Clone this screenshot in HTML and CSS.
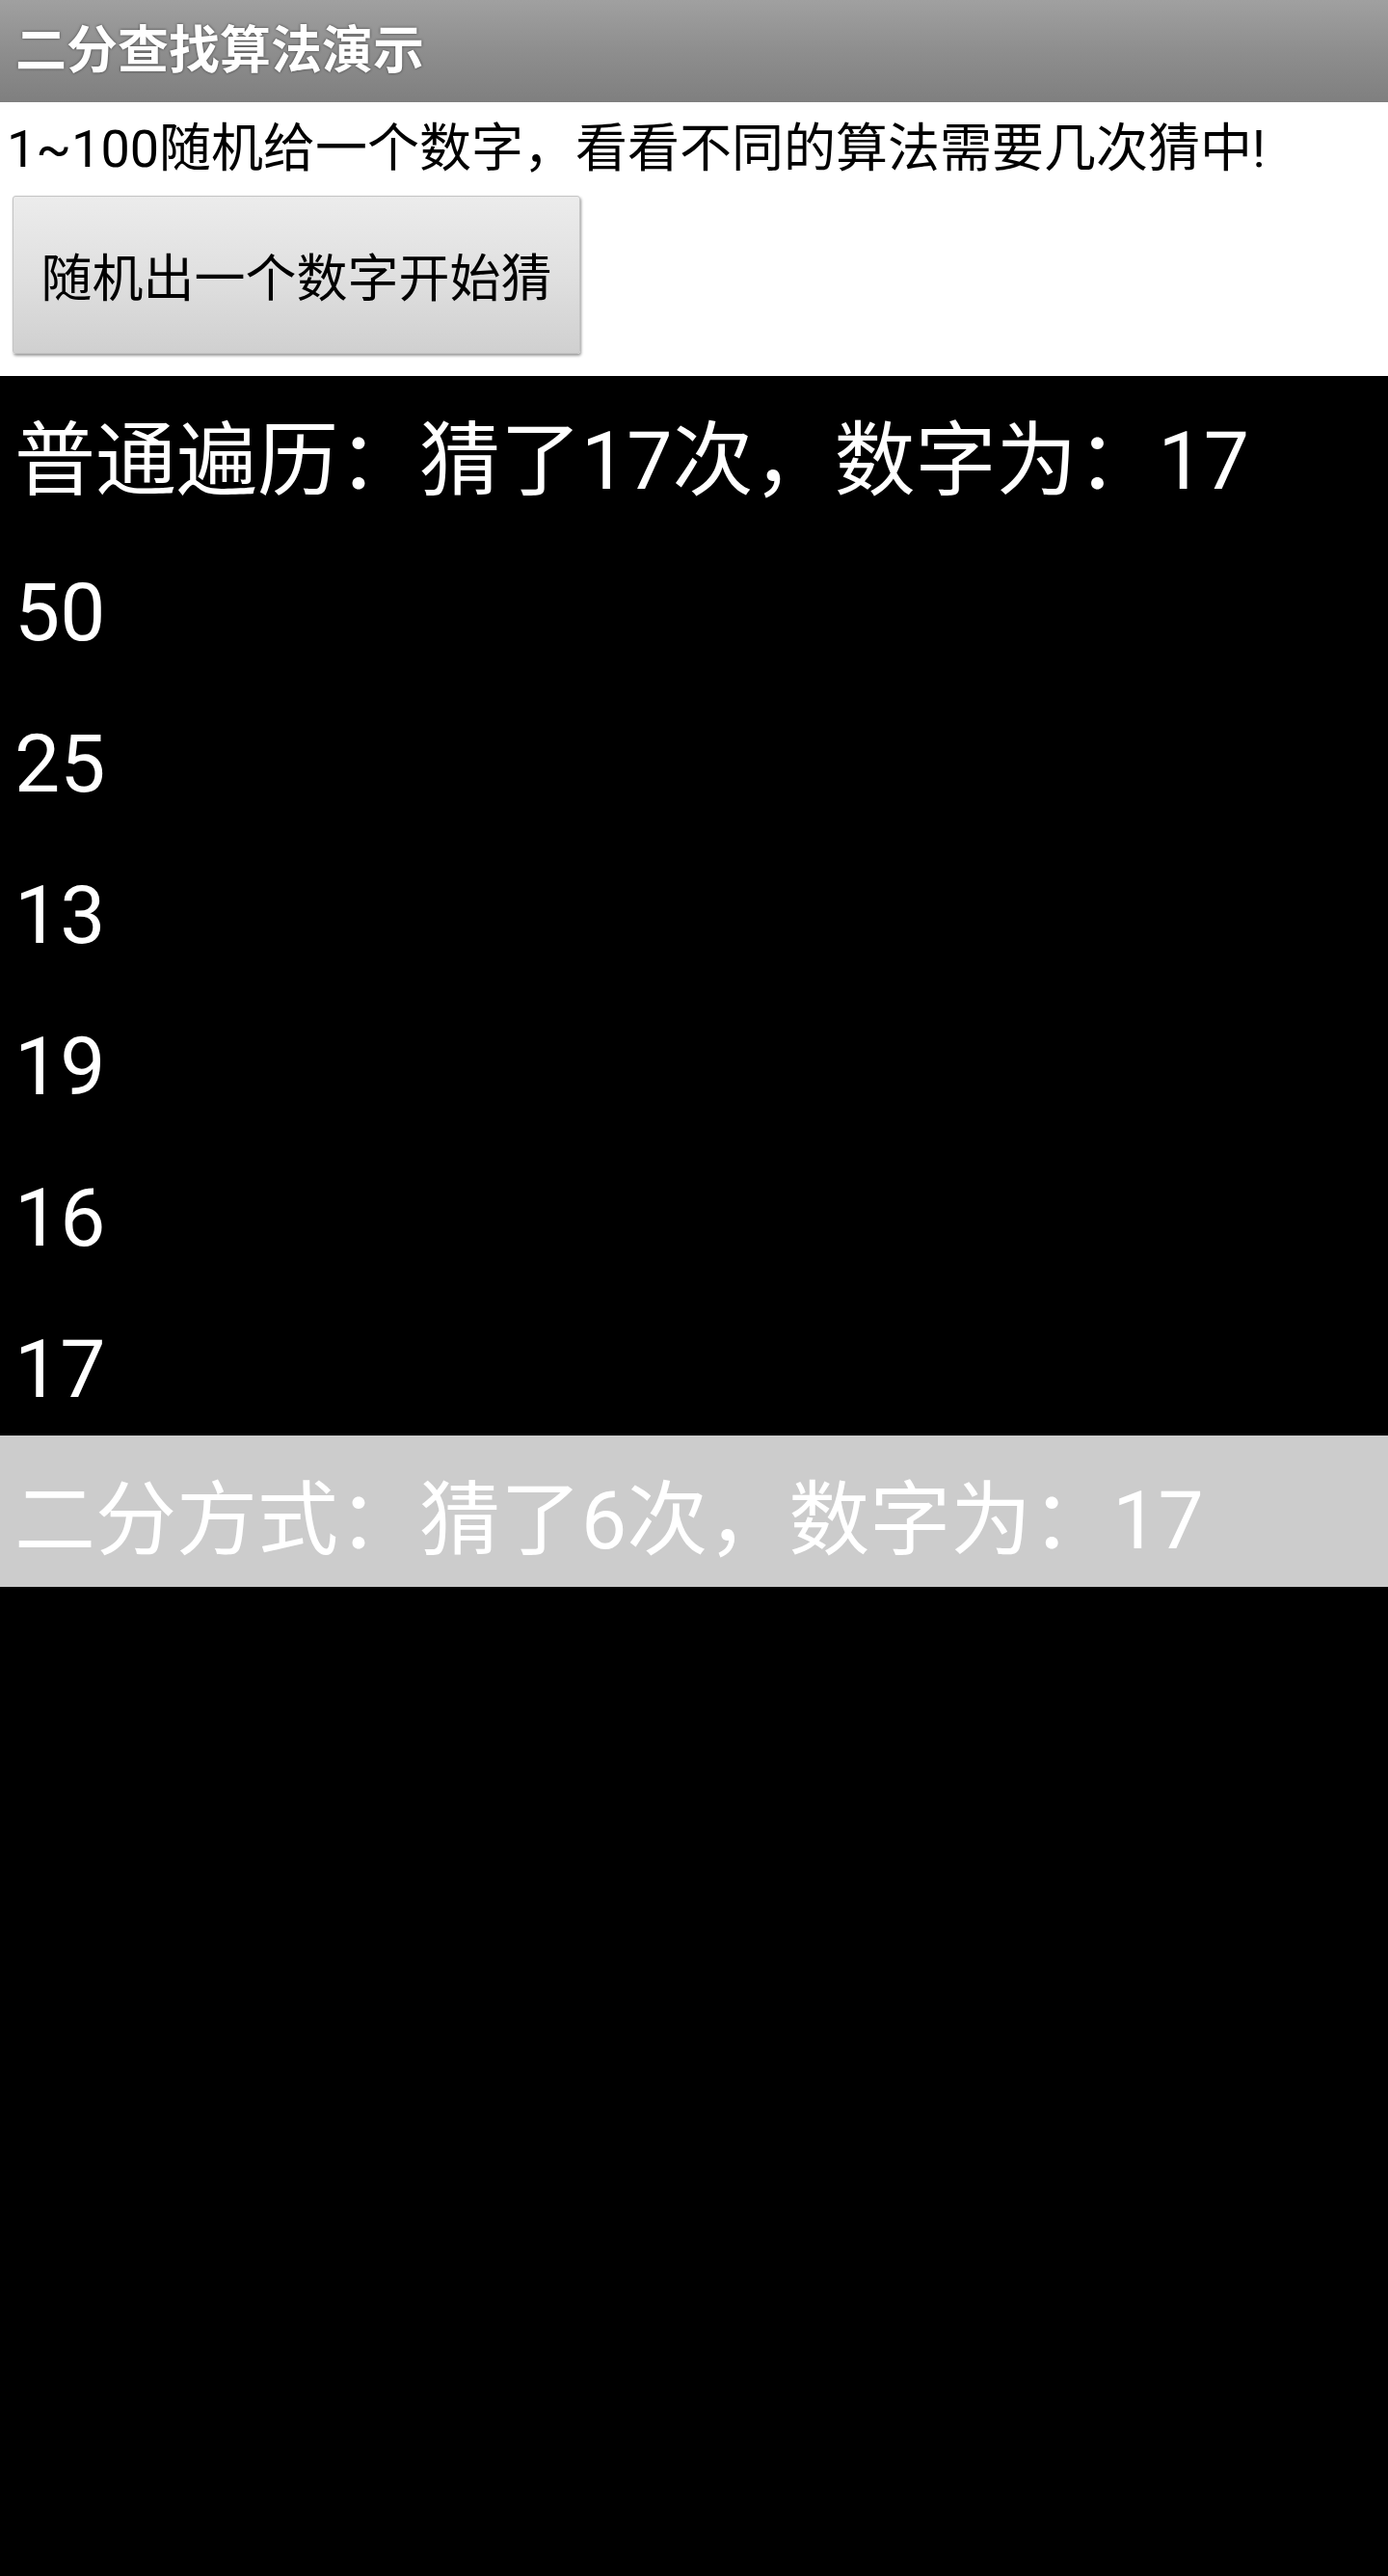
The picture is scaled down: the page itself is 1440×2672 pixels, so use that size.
FILE: index.html
```html
<!DOCTYPE html>
<html lang="zh-CN">
<head>
<meta charset="utf-8">
<title>二分查找算法演示</title>
<link rel="stylesheet" href="styles.css">
</head>
<body>
<div class="app">
  <header class="titlebar">二分查找算法演示</header>
  <section class="top">
    <p class="intro">1~100随机给一个数字，看看不同的算法需要几次猜中!</p>
    <button class="btn" type="button">随机出一个数字开始猜</button>
  </section>
  <section class="results">
    <div class="row">普通遍历：猜了17次，数字为：17</div>
    <div class="row">50</div>
    <div class="row">25</div>
    <div class="row">13</div>
    <div class="row">19</div>
    <div class="row">16</div>
    <div class="row">17</div>
    <div class="row row-gray">二分方式：猜了6次，数字为：17</div>
  </section>
</div>
</body>
</html>
```

FILE: styles.css
```css
html, body {
  margin: 0;
  padding: 0;
  background: #000;
}

body {
  font-family: Roboto, "Noto Sans CJK SC", sans-serif;
  min-height: 2672px;
}

.app {
  display: flex;
  flex-direction: column;
}

.titlebar {
  height: 106px;
  box-sizing: border-box;
  padding-left: 16px;
  line-height: 106px;
  font-size: 53px;
  font-weight: 700;
  color: #fff;
  background: linear-gradient(to bottom, #a0a0a0 0%, #8e8e8e 50%, #7f7f7f 100%);
  text-shadow: 0 0 3px rgba(0, 0, 0, 0.6);
  white-space: nowrap;
}

.top {
  background: #fff;
  display: flex;
  flex-direction: column;
  align-items: flex-start;
  padding: 14px 0 23px 0;
}

.intro {
  margin: 0;
  padding-left: 7px;
  height: 70px;
  line-height: 70px;
  font-size: 54px;
  color: #000;
  white-space: nowrap;
}

.btn {
  margin: 13px 0 0 13px;
  width: 589px;
  height: 164px;
  box-sizing: border-box;
  padding: 0;
  font-family: Roboto, "Noto Sans CJK SC", sans-serif;
  font-size: 53px;
  color: #000;
  text-align: center;
  background: linear-gradient(to bottom, #ececec 0%, #e0e0e0 50%, #d0d0d0 100%);
  border: 1px solid #c4c4c4;
  border-radius: 3px;
  box-shadow: 1px 2px 3px rgba(0, 0, 0, 0.4);
}

.results {
  display: flex;
  flex-direction: column;
  background: #000;
}

.row {
  height: 157px;
  box-sizing: border-box;
  padding: 21px 0 0 15px;
  line-height: 135px;
  font-size: 84px;
  color: #fff;
  white-space: nowrap;
  overflow: hidden;
}

.row-gray {
  background: #cccccc;
}
```
